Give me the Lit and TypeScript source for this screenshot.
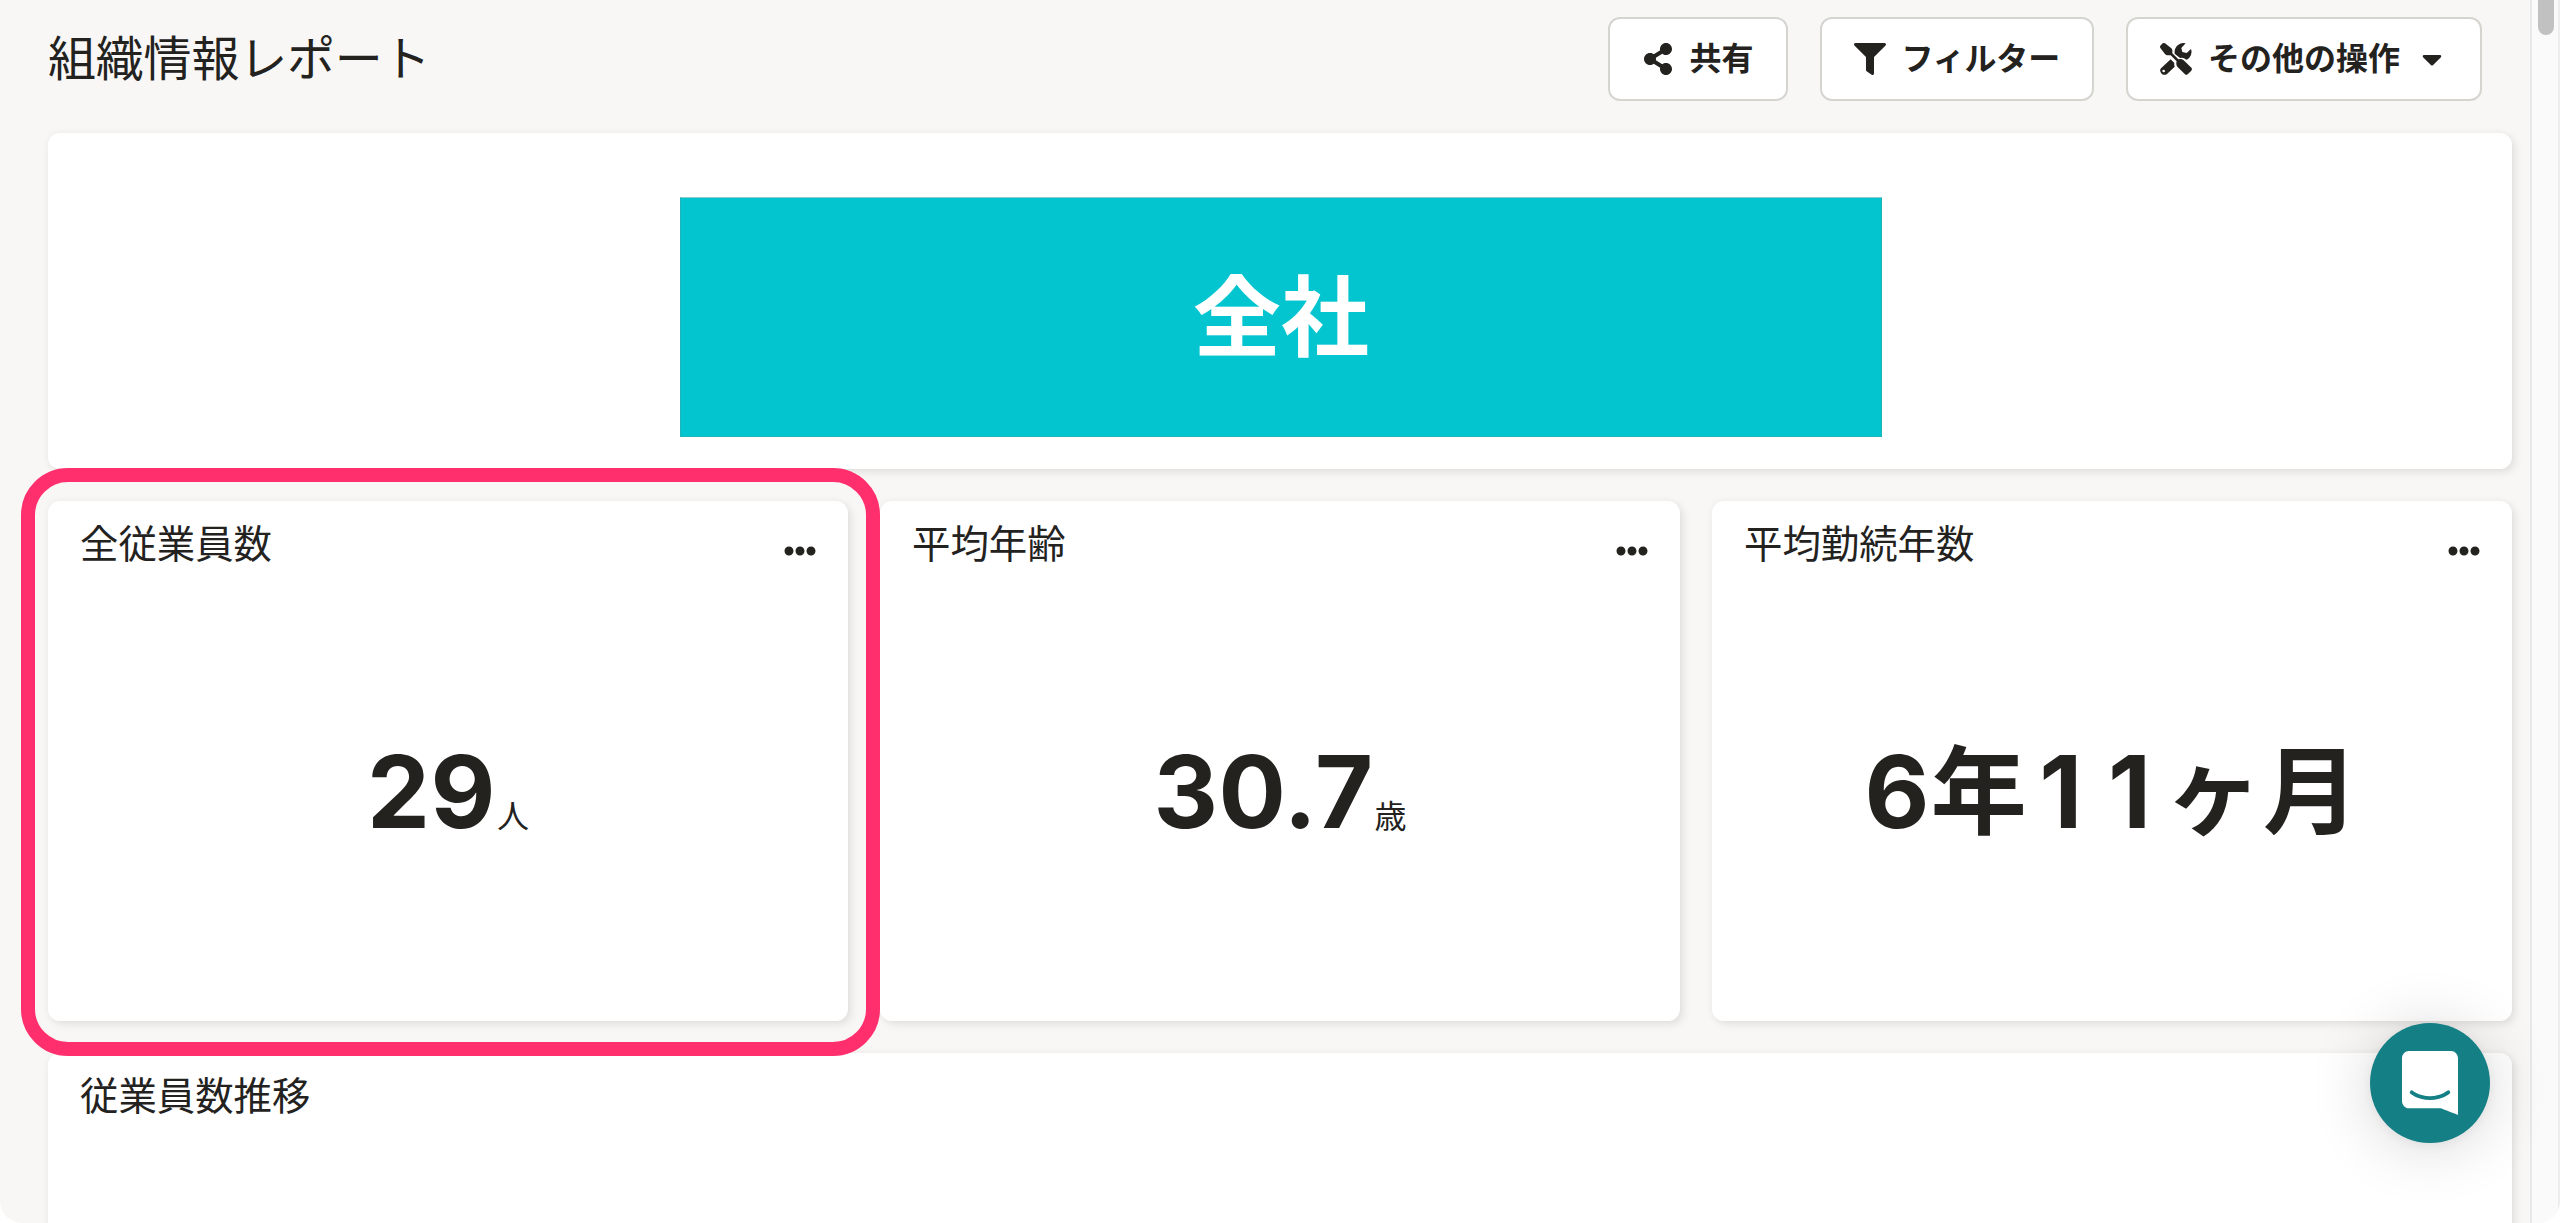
import { LitElement, html, css, svg, nothing } from "lit";
import { customElement, property } from "lit/decorators.js";

const ICONS: Record<string, { w: number; h?: number; d: string }> = {
  share: {
    w: 448,
    d: "M352 320c-22.608 0-43.387 7.819-59.79 20.895l-102.486-64.054a96.551 96.551 0 0 0 0-41.683l102.486-64.054C308.613 184.181 329.392 192 352 192c53.019 0 96-42.981 96-96S405.019 0 352 0s-96 42.981-96 96c0 7.158.79 14.13 2.276 20.841L155.79 180.895C139.387 167.819 118.608 160 96 160c-53.019 0-96 42.981-96 96s42.981 96 96 96c22.608 0 43.387-7.819 59.79-20.895l102.486 64.054A96.301 96.301 0 0 0 256 416c0 53.019 42.981 96 96 96s96-42.981 96-96-42.981-96-96-96z",
  },
  filter: {
    w: 512,
    d: "M487.976 0H24.028C2.71 0-8.047 25.866 7.058 40.971L192 225.941V432c0 7.831 3.821 15.17 10.237 19.662l80 55.98C298.02 518.69 320 507.493 320 487.98V225.941l184.947-184.97C520.021 25.896 509.338 0 487.976 0z",
  },
  tools: {
    w: 96,
    h: 96,
    d: "M1 8L8 1Q11-1 15 1L33 15Q37 18 37 22V31L55 49Q64 46 71 52L95 75Q97 79 94 83L83 94Q79 97 75 94L52 71Q47 64 50 55L32 37H22Q18 37 15 33L1 15Q-1 11 1 8zM44 32Q42 16 54 6Q64-2 77 1L64 15L67 27L80 30L93 18Q98 32 88 44Q84 49 79 50Q70 42 60 45zM32 49L43 60Q42 66 44 71L22 92Q13 99 5 92Q-3 83 3 76zM11 80a4 4 0 1 0 0 8a4 4 0 1 0 0-8z",
  },
  caret: {
    w: 320,
    d: "M31.3 192h257.3c17.8 0 26.7 21.5 14.1 34.1L174.1 354.8c-7.8 7.8-20.5 7.8-28.3 0L17.2 226.1C4.6 213.5 13.5 192 31.3 192z",
  },
  dots: {
    w: 512,
    d: "M328 256c0 39.8-32.2 72-72 72s-72-32.2-72-72 32.2-72 72-72 72 32.2 72 72zm104-72c-39.8 0-72 32.2-72 72s32.2 72 72 72 72-32.2 72-72-32.2-72-72-72zm-352 0c-39.8 0-72 32.2-72 72s32.2 72 72 72 72-32.2 72-72-32.2-72-72-72z",
  },
};

@customElement("ui-icon")
export class UiIcon extends LitElement {
  @property() name = "share";
  static styles = css`
    :host { display: block; width: 32px; height: 32px; flex: none; }
    svg { display: block; width: 32px; height: 32px; fill: currentColor; fill-rule: evenodd; }
  `;
  render() {
    const i = ICONS[this.name];
    return html`<svg viewBox="0 0 ${i.w} ${i.h ?? 512}">${svg`<path d=${i.d}></path>`}</svg>`;
  }
}

@customElement("tool-button")
export class ToolButton extends LitElement {
  @property() icon = "";
  @property() label = "";
  @property({ type: Boolean }) dropdown = false;
  static styles = css`
    :host { display: block; }
    .button {
      box-sizing: border-box; display: flex; align-items: center; gap: 16px;
      height: 84px; padding: 0 32px; margin: 0;
      border: 2px solid #d5d5d0; border-radius: 12px; background: #fff;
      color: #23221e; font: inherit; font-size: 32px; font-weight: 700;
      line-height: 32px; white-space: nowrap;
    }
    .kana { letter-spacing: -0.2px; }
  `;
  render() {
    return html`<button class="button">
      <ui-icon name=${this.icon}></ui-icon>
      <span class=${this.icon === "filter" ? "kana" : ""}>${this.label}</span>
      ${this.dropdown ? html`<ui-icon name="caret"></ui-icon>` : nothing}
    </button>`;
  }
}

@customElement("metric-card")
export class MetricCard extends LitElement {
  @property() heading = "";
  @property() value = "";
  @property() unit = "";
  static styles = css`
    :host {
      display: flex; flex-direction: column; box-sizing: border-box;
      height: 520px; border-radius: 12px; background: #fff;
      box-shadow: 0 0 8px rgba(0, 0, 0, 0.05), 4px 4px 8px rgba(0, 0, 0, 0.07);
    }
    .head { display: flex; justify-content: space-between; padding: 14px 32px 0; height: 58px; }
    .title { font-size: 38.4px; line-height: 58px; }
    .menu { padding-top: 20px; }
    .body { flex: 1; display: flex; justify-content: center; align-items: baseline; padding-top: 161px; }
    .value { font-size: 100px; line-height: 116px; font-weight: 700; letter-spacing: 0.5px; }
    /* Gives the narrow digit the same advance as the other digits. */
    .one { margin: 0 13px 0 12px; }
    .kanji { font-size: 96px; line-height: 1; margin-left: 1px; vertical-align: 2.5px; }
    .unit { font-size: 32px; margin-left: 1px; }
  `;
  private glyph(c: string) {
    if (c === "1") return html`<span class="one">${c}</span>`;
    return /[0-9.]/.test(c) ? c : html`<span class="kanji">${c}</span>`;
  }
  render() {
    return html`
      <div class="head">
        <div class="title">${this.heading}</div>
        <ui-icon class="menu" name="dots"></ui-icon>
      </div>
      <div class="body">
        <span class="value">${[...this.value].map((c) => this.glyph(c))}</span>
        ${this.unit ? html`<span class="unit">${this.unit}</span>` : nothing}
      </div>
    `;
  }
}

@customElement("app-root")
export class AppRoot extends LitElement {
  static styles = css`
    :host {
      display: block; width: 2560px; height: 1223px; overflow: hidden; background: #fff;
      color: #23221e; font-family: Inter, "Noto Sans CJK JP", sans-serif;
    }
    .window {
      position: relative; display: flex; height: 1223px; overflow: hidden;
      background: #f8f7f5; border-radius: 0 0 22px 22px;
    }
    .page { width: 2530px; box-sizing: border-box; padding: 17px 18px 0 48px; }
    .bar { display: flex; justify-content: space-between; align-items: center; height: 84px; padding-right: 30px; }
    .title { margin: 0; font-size: 48px; font-weight: 400; line-height: 72px; letter-spacing: -0.2px; }
    .actions { display: flex; gap: 32px; }
    .grid { display: grid; grid-template-columns: repeat(3, 800px); gap: 32px; margin-top: 32px; }
    .panel {
      grid-column: 1 / -1; box-sizing: border-box; border-radius: 12px; background: #fff;
      box-shadow: 0 0 8px rgba(0, 0, 0, 0.05), 4px 4px 8px rgba(0, 0, 0, 0.07);
    }
    .hero { height: 336px; padding-top: 64px; }
    .banner {
      box-sizing: border-box; width: 1202px; height: 240px; margin: 0 auto; position: relative; left: 1px;
      display: flex; align-items: center; justify-content: center;
      border: 1px solid #1fb4ba; border-top-color: #8fc9cb; background: #02c5cf; color: #fff;
      font-size: 88px; font-weight: 700; line-height: 120px;
    }
    .trend { height: 400px; padding: 14px 32px; font-size: 38.4px; line-height: 58px; }
    .track {
      box-sizing: border-box; width: 30px; border-left: 2px solid #e8e8e8; border-right: 2px solid #ededed;
      background: #fafafa; padding-left: 6px;
    }
    .thumb { width: 16px; height: 35px; border-radius: 0 0 8px 8px; background: #c1c1c1; }
    .focus {
      position: absolute; left: 20.7px; top: 468px; width: 859.6px; height: 587.6px; box-sizing: border-box;
      border: 14px solid #ff2f6e; border-radius: 47px;
    }
    .launcher {
      position: absolute; left: 2370px; top: 1023px; width: 120px; height: 120px; border-radius: 50%;
      display: flex; align-items: center; justify-content: center; background: #147f85;
      box-shadow: 0 2px 12px rgba(0, 0, 0, 0.06), 0 4px 64px rgba(0, 0, 0, 0.16);
    }
    .launcher svg { display: block; width: 56px; height: 64px; fill: #fff; }
  `;
  render() {
    return html`
      <div class="window">
        <main class="page">
          <header class="bar">
            <h1 class="title">組織情報レポート</h1>
            <div class="actions">
              <tool-button icon="share" label="共有"></tool-button>
              <tool-button icon="filter" label="フィルター"></tool-button>
              <tool-button icon="tools" label="その他の操作" dropdown></tool-button>
            </div>
          </header>
          <section class="grid">
            <div class="panel hero"><div class="banner">全社</div></div>
            <metric-card heading="全従業員数" value="29" unit="人"></metric-card>
            <metric-card heading="平均年齢" value="30.7" unit="歳"></metric-card>
            <metric-card heading="平均勤続年数" value="6年11ヶ月"></metric-card>
            <div class="panel trend">従業員数推移</div>
          </section>
        </main>
        <div class="track"><div class="thumb"></div></div>
        <div class="focus"></div>
        <div class="launcher">
          <svg viewBox="0 0 28 32">
            <path d="M28 32s-4.714-1.855-8.527-3.34H3.437C1.54 28.66 0 27.026 0 25.013V3.644C0 1.633 1.54 0 3.437 0h21.125c1.898 0 3.437 1.632 3.437 3.645v18.404H28V32zm-4.139-11.982a.88.88 0 00-1.292-.105c-.03.026-3.015 2.681-8.57 2.681-5.486 0-8.517-2.636-8.571-2.684a.88.88 0 00-1.29.107 1.01 1.01 0 00-.219.708.992.992 0 00.318.664c.142.128 3.537 3.15 9.762 3.15 6.226 0 9.621-3.022 9.763-3.15a.992.992 0 00.317-.664 1.01 1.01 0 00-.218-.707z"></path>
          </svg>
        </div>
      </div>
    `;
  }
}
